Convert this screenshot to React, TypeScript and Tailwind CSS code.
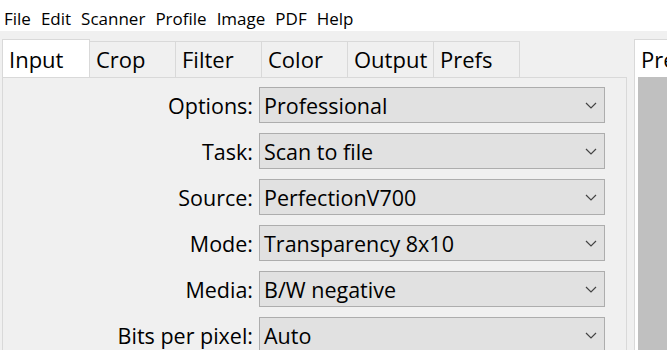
import React from 'react';

const menus = ['File', 'Edit', 'Scanner', 'Profile', 'Image', 'PDF', 'Help'];
const tabs = ['Input', 'Crop', 'Filter', 'Color', 'Output', 'Prefs'];

const rows = [
  { label: 'Options:', value: 'Professional' },
  { label: 'Task:', value: 'Scan to file' },
  { label: 'Source:', value: 'PerfectionV700' },
  { label: 'Mode:', value: 'Transparency 8x10' },
  { label: 'Media:', value: 'B/W negative' },
  { label: 'Bits per pixel:', value: 'Auto' },
];

const Chevron = () => (
  <svg width="12" height="7" viewBox="0 0 12 7" className="shrink-0">
    <path d="M1 1 L6 6 L11 1" fill="none" stroke="#444" strokeWidth="1.2" />
  </svg>
);

export default function App() {
  return (
    <div className="w-[667px] h-[350px] overflow-hidden bg-[#f0f0f0] text-black font-['Open_Sans',sans-serif]">
      {/* Menu bar */}
      <div className="h-[31px] bg-white flex items-center pt-[6px] pl-[4px] gap-[10px] text-[17px] leading-none">
        {menus.map(m => (
          <span key={m}>{m}</span>
        ))}
      </div>

      <div className="flex pt-[8px]">
        {/* Left tab widget */}
        <div className="w-[627px] shrink-0 pl-[2px] flex flex-col">
          <div className="flex h-[38px] items-end">
            {tabs.map((t, i) =>
              i === 0 ? (
                <div key={t} className="w-[88px] h-[38px] bg-white border border-b-0 border-[#d9d9d9] pl-[6px] pt-[1px] flex items-center text-[22px]">
                  {t}
                </div>
              ) : (
                <div key={t} className="w-[86px] h-[36px] bg-[#f0f0f0] border border-l-0 border-b-0 border-[#d9d9d9] pl-[6px] flex items-center text-[22px]">
                  {t}
                </div>
              )
            )}
          </div>
          <div className="h-[300px] border border-[#d9d9d9] bg-[#f0f0f0] pt-[9px] flex flex-col gap-[10px]">
            {rows.map(r => (
              <div key={r.label} className="flex items-center h-[36px]">
                <div className="w-[256px] shrink-0 text-right text-[21.5px] pr-[6px] pt-[2px]">{r.label}</div>
                <div className="w-[346px] h-[36px] bg-[#e1e1e1] border border-[#adadad] flex items-center justify-between pl-[4px] pr-[7px] text-[21.5px]">
                  <span className="pt-[2px]">{r.value}</span>
                  <Chevron />
                </div>
              </div>
            ))}
          </div>
        </div>

        {/* Right preview panel */}
        <div className="ml-[7px] flex-1 flex flex-col min-w-0">
          <div className="h-[38px] bg-white border border-r-0 border-b-0 border-[#d9d9d9] pl-[6px] pt-[1px] flex items-center text-[22px] whitespace-nowrap overflow-hidden">
            Preview
          </div>
          <div className="h-[300px] bg-white border-l border-[#d9d9d9] pl-[3px]">
            <div className="h-full bg-[#c0c0c0]" />
          </div>
        </div>
      </div>
    </div>
  );
}
